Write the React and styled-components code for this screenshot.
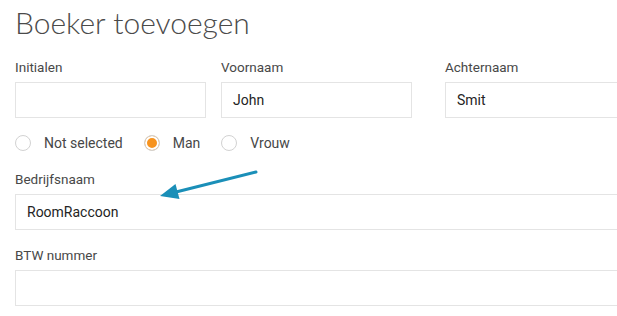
import styled, { createGlobalStyle } from "styled-components"

const GlobalStyle = createGlobalStyle`
    html, body {
        margin: 0;
        padding: 0;
        background: #ffffff;
        overflow: hidden;
    }
    body {
        font-family: Roboto, "Liberation Sans", sans-serif;
    }
`

const Page = styled.div`
    position: relative;
    width: 100vw;
    padding: 4px 0 0 15px;
    box-sizing: border-box;
    overflow: hidden;
`

const Title = styled.h1`
    font-family: Lato, "Open Sans", sans-serif;
    font-weight: 300;
    font-size: 30px;
    line-height: 36px;
    color: #4a4a4a;
    margin: 0 0 19px 0;
`

const Row = styled.div`
    display: grid;
    grid-template-columns: 191px 191px 1fr;
    column-gap: 15px;
    margin-right: -40px;
`

const Field = styled.div`
    display: flex;
    flex-direction: column;
    margin-left: ${prop => prop.$offset || "0px"};
    margin-top: ${prop => prop.$top || "0px"};
    margin-right: ${prop => prop.$bleed ? "-40px" : "0px"};
`

const Label = styled.label`
    font-size: 13.5px;
    line-height: 16px;
    color: #484848;
    margin-bottom: 7px;
`

const Input = styled.div`
    height: 36px;
    box-sizing: border-box;
    border: 1px solid #e4e4e4;
    padding: 0 11px;
    display: flex;
    align-items: center;
    font-size: 14px;
    color: #242424;
`

const RadioGroup = styled.div`
    display: flex;
    align-items: center;
    margin-top: 17px;
    height: 16px;
    gap: 21px;
`

const RadioOption = styled.div`
    display: flex;
    align-items: center;
    gap: 13px;
    font-size: 14px;
    color: #474747;
`

const Circle = styled.span`
    width: 16px;
    height: 16px;
    box-sizing: border-box;
    border-radius: 50%;
    border: 1px solid #d2d2d2;
    background: ${prop => prop.$checked ? "#f7931e" : "#ffffff"};
    box-shadow: ${prop => prop.$checked ? "inset 0 0 0 2px #ffffff" : "none"};
`

const Arrow = styled.svg`
    position: absolute;
    left: 150px;
    top: 160px;
    overflow: visible;
`

function Radio({ label, checked }) {
    return (
        <RadioOption>
            <Circle $checked={checked} />
            {label}
        </RadioOption>
    )
}

function App() {
    return (
        <Page>
            <GlobalStyle />
            <Title>Boeker toevoegen</Title>
            <Row>
                <Field>
                    <Label>Initialen</Label>
                    <Input />
                </Field>
                <Field>
                    <Label>Voornaam</Label>
                    <Input>John</Input>
                </Field>
                <Field $offset="18px">
                    <Label>Achternaam</Label>
                    <Input>Smit</Input>
                </Field>
            </Row>
            <RadioGroup>
                <Radio label="Not selected" />
                <Radio label="Man" checked />
                <Radio label="Vrouw" />
            </RadioGroup>
            <Field $top="20px" $bleed>
                <Label>Bedrijfsnaam</Label>
                <Input>RoomRaccoon</Input>
            </Field>
            <Field $top="17px" $bleed>
                <Label>BTW nummer</Label>
                <Input />
            </Field>
            <Arrow width="120" height="45" viewBox="0 0 120 45">
                <line x1="106" y1="12" x2="26" y2="32" stroke="#1a8fb8" strokeWidth="3" strokeLinecap="round" />
                <polygon points="10,36 29.5,39 25.5,24" fill="#1a8fb8" />
            </Arrow>
        </Page>
    )
}

export default App
